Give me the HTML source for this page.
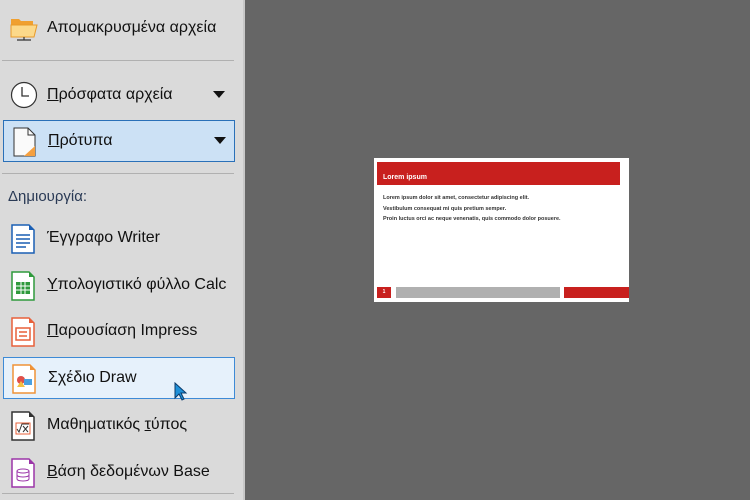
<!DOCTYPE html>
<html><head><meta charset="utf-8"><style>
body{margin:0;width:750px;height:500px;overflow:hidden;background:#666;font-family:"Liberation Sans","DejaVu Sans",sans-serif;position:relative}
#side{position:absolute;left:0;top:0;width:243px;height:500px;background:#dadada;border-right:2px solid #c8c8c8}
.it{position:absolute;left:3px;width:230px;height:40px;font-size:16px;color:#111}
.it .t{position:absolute;left:44px;top:11px;white-space:nowrap}
.it svg{position:absolute;left:6px;top:5px}
.sel{border:1px solid #2a70b8;background:#cce1f5}
.hov{border:1px solid #3d8ad6;background:#e6f1fb}
.sep{position:absolute;left:2px;width:232px;height:1px;background:#b0b0b0}
.arr{position:absolute;right:8px;top:16px;width:0;height:0;border-left:6px solid transparent;border-right:6px solid transparent;border-top:7px solid #111}
u{text-decoration:underline}
</style></head><body>
<div id="side">
<div class="it" style="top:8px"><svg width="30" height="30" viewBox="0 0 30 30"><path d="M2 6h8l2 2h12v4H2z" fill="#f0a030"/><path d="M2 12h26l-3 12H2z" fill="#fcd98a" stroke="#e89a2a"/><path d="M15 24v3M8 27h14" stroke="#333" stroke-width="1.2"/></svg><span class="t">Απομακρυσμένα αρχεία</span></div>
<div class="sep" style="top:60px"></div>
<div class="it" style="top:75px"><svg width="30" height="30" viewBox="0 0 30 30"><circle cx="15" cy="15" r="12.5" fill="#fff" stroke="#333" stroke-width="1.2"/><path d="M13 7v9h7" stroke="#333" stroke-width="1.3" fill="none"/></svg><span class="t"><u>Π</u>ρόσφατα αρχεία</span><div class="arr"></div></div>
<div class="it sel" style="top:120px;height:40px"><svg width="30" height="32" viewBox="0 0 30 32"><path d="M4 2h14l7 7v21H4z" fill="#fafafa" stroke="#333"/><path d="M18 2v7h7" fill="none" stroke="#333"/><path d="M14 30l11-10v10z" fill="#f5a040"/></svg><span class="t"><u>Π</u>ρότυπα</span><div class="arr"></div></div>
<div class="sep" style="top:173px"></div>
<div style="position:absolute;left:8px;top:188px;font-size:15px;color:#2a3a55">Δημιουργία:</div>
<div class="it" style="top:218px"><svg width="28" height="32" viewBox="0 0 28 32"><path d="M3 2h17l5 5v23H3z" fill="#fff" stroke="#1a5fb4" stroke-width="1.5"/><path d="M20 2l5 5h-5z" fill="#1a5fb4"/><path d="M7 12h14M7 16h14M7 20h14M7 24h10" stroke="#1a5fb4" stroke-width="1.6"/></svg><span class="t">Έγγραφο Writer</span></div>
<div class="it" style="top:265px"><svg width="28" height="32" viewBox="0 0 28 32"><path d="M3 2h17l5 5v23H3z" fill="#fff" stroke="#2f9a3c" stroke-width="1.5"/><path d="M20 2l5 5h-5z" fill="#2f9a3c"/><rect x="7" y="12" width="14" height="12" fill="#2f9a3c"/><path d="M7 16h14M7 20h14M12 12v12M16 12v12" stroke="#fff"/></svg><span class="t"><u>Υ</u>πολογιστικό φύλλο Calc</span></div>
<div class="it" style="top:311px"><svg width="28" height="32" viewBox="0 0 28 32"><path d="M3 2h17l5 5v23H3z" fill="#fff" stroke="#e8603a" stroke-width="1.5"/><path d="M20 2l5 5h-5z" fill="#e8603a"/><rect x="7" y="12" width="14" height="12" fill="none" stroke="#e8603a" stroke-width="1.5"/><path d="M10 16h8M10 20h8" stroke="#e8603a" stroke-width="1.5"/></svg><span class="t"><u>Π</u>αρουσίαση Impress</span></div>
<div class="it hov" style="top:357px;height:40px"><svg width="28" height="32" viewBox="0 0 28 32"><path d="M3 2h17l5 5v23H3z" fill="#fff" stroke="#ef9338" stroke-width="1.5"/><path d="M20 2l5 5h-5z" fill="#ef9338"/><circle cx="11" cy="17" r="4" fill="#e0504a"/><path d="M7 24l4-6 4 6z" fill="#f4c040"/><rect x="14" y="16" width="8" height="6" fill="#4aa0e0"/></svg><span class="t">Σχέδιο Draw</span>
<svg style="left:170px;top:24px" width="14" height="20" viewBox="0 0 14 20"><path d="M1 1v15l4-4 3 6 2-1-3-6h5z" fill="#1e90d8" stroke="#0a3a6a"/></svg></div>
<div class="it" style="top:405px"><svg width="28" height="32" viewBox="0 0 28 32"><path d="M3 2h17l5 5v23H3z" fill="#fff" stroke="#333" stroke-width="1.5"/><path d="M20 2l5 5h-5z" fill="#333"/><rect x="7" y="13" width="14" height="11" fill="none" stroke="#e8603a"/><path d="M8 19l2 3 3-8h7M14 16l5 6M19 16l-5 6" stroke="#333" fill="none"/></svg><span class="t">Μαθηματικός <u>τ</u>ύπος</span></div>
<div class="it" style="top:452px"><svg width="28" height="32" viewBox="0 0 28 32"><path d="M3 2h17l5 5v23H3z" fill="#fff" stroke="#9b35a8" stroke-width="1.5"/><path d="M20 2l5 5h-5z" fill="#9b35a8"/><ellipse cx="14" cy="14" rx="6" ry="2" fill="none" stroke="#9b35a8"/><path d="M8 14v8c0 2.6 12 2.6 12 0v-8M8 18c0 2.6 12 2.6 12 0" fill="none" stroke="#9b35a8"/></svg><span class="t"><u>Β</u>άση δεδομένων Base</span></div>
<div class="sep" style="top:493px"></div>
</div>
<div style="position:absolute;left:374px;top:158px;width:255px;height:144px;background:#fff;font-weight:bold">
<div style="position:absolute;left:3px;top:4px;width:243px;height:23px;background:#c8201e;color:#fff;font-size:7px"><span style="position:absolute;left:6px;top:12px">Lorem ipsum</span></div>
<div style="position:absolute;left:9px;top:35px;font-size:5.5px;color:#333;line-height:10.5px">Lorem ipsum dolor sit amet, consectetur adipiscing elit.<br>Vestibulum consequat mi quis pretium semper.<br>Proin luctus orci ac neque venenatis, quis commodo dolor posuere.</div>
<div style="position:absolute;left:3px;top:129px;width:14px;height:11px;background:#c8201e;color:#fff;font-size:5px;text-align:center;line-height:11px">1</div>
<div style="position:absolute;left:22px;top:129px;width:164px;height:11px;background:#b0b0b0"></div>
<div style="position:absolute;left:190px;top:129px;width:65px;height:11px;background:#c8201e"></div>
</div>
</body></html>
